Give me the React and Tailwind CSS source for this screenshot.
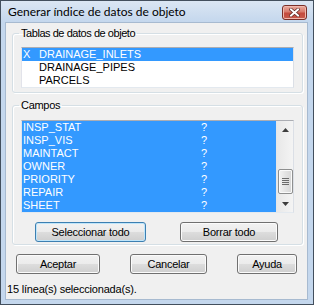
import React from "react";

const tables = [
  { mark: "X", name: "DRAINAGE_INLETS", sel: true },
  { mark: "", name: "DRAINAGE_PIPES" },
  { mark: "", name: "PARCELS" },
];

const fields = ["INSP_STAT", "INSP_VIS", "MAINTACT", "OWNER", "PRIORITY", "REPAIR", "SHEET"];

function WinButton({ children, focused, className = "" }) {
  return (
    <button
      className={`h-[20px] rounded-[3px] border ${
        focused
          ? "border-[#3c7fb1] shadow-[inset_0_0_0_1px_#bfe5fa]"
          : "border-[#707070] shadow-[inset_0_0_0_1px_#fbfbfb]"
      } bg-[linear-gradient(to_bottom,#f2f2f2_0%,#ebebeb_50%,#dddddd_50%,#cfcfcf_100%)] text-[11px] leading-[13px] tracking-[-0.25px] text-black flex items-center justify-center ${className}`}
    >
      {children}
    </button>
  );
}

function CloseButton() {
  return (
    <div className="mt-[4px] w-[25px] h-[15px] rounded-[3px] border border-[#7a2f28] bg-[linear-gradient(to_bottom,#e9aa9d_0%,#d87a6c_45%,#c54a3d_55%,#c85a4c_100%)] shadow-[inset_0_0_0_1px_#f0b8ad] flex items-center justify-center">
      <svg width="11" height="9" viewBox="0 0 11 9">
        <path d="M2 1.5 L9 7.5 M9 1.5 L2 7.5" stroke="#5a2620" strokeWidth="3.4" strokeLinecap="square" />
        <path d="M2 1.5 L9 7.5 M9 1.5 L2 7.5" stroke="#ffffff" strokeWidth="2" strokeLinecap="square" />
      </svg>
    </div>
  );
}

function ScrollBar() {
  return (
    <div className="w-[17px] flex flex-col border-l border-[#e6e6e6] bg-[linear-gradient(to_right,#e8e8e8,#f4f4f4)]">
      <div className="h-[17px] flex items-center justify-center">
        <svg width="7" height="4" viewBox="0 0 7 4">
          <path d="M3.5 0 L7 4 L0 4 Z" fill="#3d3d3d" />
        </svg>
      </div>
      <div className="flex-1 flex flex-col justify-end items-center pb-[1px]">
        <div className="w-[15px] h-[25px] rounded-[2px] border border-[#8e8f8f] bg-[linear-gradient(to_right,#f3f3f3,#e3e3e3_50%,#d6d6d6)] shadow-[inset_0_0_0_1px_#fafafa] flex flex-col items-center justify-center gap-[1px]">
          <div className="w-[7px] h-[1px] bg-[#6b6b6b]" />
          <div className="w-[7px] h-[1px] bg-[#6b6b6b]" />
          <div className="w-[7px] h-[1px] bg-[#6b6b6b]" />
          <div className="w-[7px] h-[1px] bg-[#6b6b6b]" />
        </div>
      </div>
      <div className="h-[17px] flex items-center justify-center">
        <svg width="7" height="4" viewBox="0 0 7 4">
          <path d="M0 0 L7 0 L3.5 4 Z" fill="#3d3d3d" />
        </svg>
      </div>
    </div>
  );
}

const listBorder = "border border-t-[#abadb3] border-l-[#e2e3ea] border-r-[#dbdfe6] border-b-[#e3e9ef] bg-white";
const groupBox = "ml-[6px] mr-[4px] border border-[#d5dfe5] rounded-[3px] px-[8px] shadow-[inset_1px_1px_0_#ffffff,1px_1px_0_#ffffff]";

export default function App() {
  return (
    <div className="w-[314px] h-[305px] bg-[#c4d7ed] border border-[#434f5d] flex flex-col font-['Liberation_Sans',Arial,sans-serif] text-[11px] text-black">
      <div className="h-[21px] flex items-start justify-between pl-[7px] pr-[6px] bg-[linear-gradient(to_bottom,#dbe6f3,#c4d7ed)]">
        <span className="mt-[3px] font-['Lato',sans-serif] text-[12px] leading-[16px]">
          Generar índice de datos de objeto
        </span>
        <CloseButton />
      </div>

      <div className="flex-1 ml-[4px] mr-[5px] mb-[4px] border border-[#a7bad0] bg-[#f0f0f0] flex flex-col">
        <fieldset className={`${groupBox} mt-[4px] pt-[7px] pb-[4px]`}>
          <legend className="-ml-[2px] px-[2px] leading-[13px] tracking-[-0.45px]">Tablas de datos de objeto</legend>
          <div className={`${listBorder} h-[41px]`}>
            {tables.map((t) => (
              <div
                key={t.name}
                className={`h-[13px] leading-[13px] pl-[1px] flex ${t.sel ? "bg-[#3399ff] text-white" : ""}`}
              >
                <span className="w-[16px]">{t.mark}</span>
                <span>{t.name}</span>
              </div>
            ))}
          </div>
        </fieldset>

        <fieldset className={`${groupBox} mt-[6px] pt-[8px] pb-[2px]`}>
          <legend className="-ml-[2px] px-[2px] leading-[13px] tracking-[-0.3px]">Campos</legend>
          <div className={`${listBorder} h-[93px] flex`}>
            <div className="flex-1 bg-[#3399ff] text-white">
              {fields.map((f) => (
                <div key={f} className="h-[13px] leading-[13px] pl-[1px] flex">
                  <span className="w-[178px]">{f}</span>
                  <span>?</span>
                </div>
              ))}
            </div>
            <ScrollBar />
          </div>
          <div className="mt-[9px] flex pl-[14px] gap-[34px]">
            <WinButton focused className="w-[111px]">Seleccionar todo</WinButton>
            <WinButton className="w-[98px]">Borrar todo</WinButton>
          </div>
        </fieldset>

        <div className="mt-[9px] flex pl-[10px]">
          <WinButton className="w-[84px]">Aceptar</WinButton>
          <WinButton className="ml-[30px] w-[77px]">Cancelar</WinButton>
          <WinButton className="ml-[30px] w-[60px]">Ayuda</WinButton>
        </div>

        <div className="mt-[9px] pl-[1px] leading-[13px] tracking-[-0.2px]">15 línea(s) seleccionada(s).</div>
      </div>
    </div>
  );
}
